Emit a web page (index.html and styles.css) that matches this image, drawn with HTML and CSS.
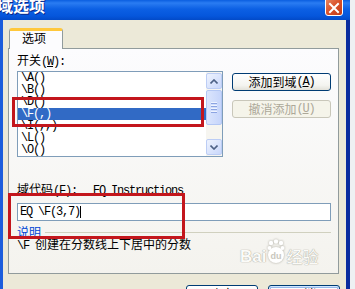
FILE: index.html
```html
<!DOCTYPE html>
<html>
<head>
  <meta charset="UTF-8">
  <title>域选项</title>
  <link rel="stylesheet" href="styles.css">
</head>
<body>
<div class="window">
  <div class="titlebar">
    <span class="title">域选项</span>
    <span class="close">
      <svg width="12" height="12" viewBox="0 0 12 12"><path d="M2 2L10 10M10 2L2 10" stroke="#fff" stroke-width="2" stroke-linecap="square"/></svg>
    </span>
  </div>
  <div class="frame">
    <div class="tab">选项</div>
    <div class="panel">
      <div class="label">开关<span class="a">(<u>W</u>):</span></div>
      <div class="switch-row">
        <div class="listbox">
          <ul class="items a">
            <li>\A()</li>
            <li>\B()</li>
            <li>\D()</li>
            <li class="sel">\F(,)</li>
            <li>\I(,,)</li>
            <li>\L()</li>
            <li>\O()</li>
          </ul>
          <div class="scrollbar">
            <div class="sb-btn">
              <svg width="8" height="5" viewBox="0 0 8 5"><path d="M0.5 4.5L4 1L7.5 4.5" fill="none" stroke="#4d6185" stroke-width="1.6"/></svg>
            </div>
            <div class="sb-thumb"><i></i><i></i><i></i><i></i></div>
            <div class="sb-track"></div>
            <div class="sb-btn">
              <svg width="8" height="5" viewBox="0 0 8 5"><path d="M0.5 0.5L4 4L7.5 0.5" fill="none" stroke="#4d6185" stroke-width="1.6"/></svg>
            </div>
          </div>
        </div>
        <div class="side-btns">
          <div class="btn">添加到域<span class="a">(<u>A</u>)</span></div>
          <div class="btn off">撤消添加<span class="a">(<u>U</u>)</span></div>
        </div>
      </div>
      <div class="code-label">域代码<span class="a">(<u>F</u>):</span><span class="a code-name">EQ Instructions</span></div>
      <div class="input"><span class="a">EQ \F(3,7)</span><span class="caret"></span></div>
      <div class="group"><span>说明</span><i class="rule"></i></div>
      <div class="desc"><span class="a">\F </span>创建在分数线上下居中的分数</div>
      <div class="watermark">
        <span class="wm-bai">Bai</span>
        <span class="wm-paw">
          <svg width="18" height="26" viewBox="0 0 18 26">
            <circle cx="4" cy="4" r="2.2" fill="#fff"/>
            <circle cx="9" cy="2.5" r="2.2" fill="#fff"/>
            <circle cx="14" cy="4" r="2.2" fill="#fff"/>
            <circle cx="2.5" cy="9" r="2" fill="#fff"/>
            <circle cx="15.5" cy="9" r="2" fill="#fff"/>
            <circle cx="9" cy="16" r="8" fill="#fff"/>
          </svg>
          <span class="wm-du">du</span>
        </span>
        <span class="wm-jy">经验</span>
      </div>
    </div>
    <div class="bottom-btns">
      <div class="btn big">确定</div>
      <div class="btn big default">取消</div>
    </div>
  </div>
</div>
<div class="mark mark-list"></div>
<div class="mark mark-code"></div>
</body>
</html>
```

FILE: styles.css
```css
* {
  margin: 0;
  padding: 0;
  box-sizing: border-box;
}

html, body {
  width: 355px;
  height: 289px;
  overflow: hidden;
}

body {
  background: #eef0f3;
  font-family: "Noto Sans CJK SC", sans-serif;
  font-size: 12px;
  line-height: 12px;
  color: #000;
  position: relative;
}

/* ascii text, SimSun-like half width */
.a {
  font-family: "Liberation Mono", monospace;
  font-size: 12px;
  letter-spacing: -1.2px;
}

ul {
  list-style: none;
}

.window {
  width: 350px;
  height: 289px;
  display: flex;
  flex-direction: column;
}

.titlebar {
  height: 20px;
  flex: none;
  display: flex;
  justify-content: space-between;
  align-items: flex-start;
  padding-right: 7px;
  background: linear-gradient(#0a5ee0, #2a7cf2 15%, #0c60e4 45%, #0556dc 80%, #024ac8);
  overflow: hidden;
}

.title {
  color: #fff;
  font-size: 16px;
  line-height: 16px;
  font-weight: bold;
  margin: -3px 0 0 -3px;
  text-shadow: 1px 1px 0 #0a2a8c;
}

.close {
  width: 18px;
  height: 19px;
  margin-top: -3px;
  display: flex;
  align-items: center;
  justify-content: center;
  padding-top: 3px;
  border: 1px solid #fff;
  border-radius: 3px;
  background: linear-gradient(135deg, #e98a66, #d9512a 50%, #c23a17);
}

.frame {
  flex: 1;
  background: #ece9d8;
  border-left: 3px solid #1c5ddc;
  border-right: 4px solid #0a2c9e;
  padding: 8px 7px 0 5px;
}

.tab {
  width: 54px;
  height: 21px;
  margin-left: 1px;
  margin-bottom: -1px;
  position: relative;
  z-index: 1;
  border: 1px solid #919b9c;
  border-top: 3px solid #ffc83c;
  border-bottom: none;
  border-radius: 3px 3px 0 0;
  background: #fcfcfe;
  padding: 1px 0 0 12px;
}

.panel {
  height: 226px;
  position: relative;
  border: 1px solid #919b9c;
  background: linear-gradient(#fcfcfe, #f4f3ee);
  padding: 5px 7px 0 8px;
}

.label {
  margin-bottom: 3px;
}

.switch-row {
  display: flex;
  gap: 9px;
}

.listbox {
  width: 206px;
  height: 86px;
  border: 1px solid #7f9db9;
  background: #fff;
  display: flex;
}

.items {
  flex: 1;
}

.items li {
  height: 12px;
  line-height: 12px;
  padding-left: 3px;
  white-space: pre;
}

.items li.sel {
  background: #316ac5;
  color: #fff;
}

.scrollbar {
  width: 16px;
  background: #f6f5f0;
  display: flex;
  flex-direction: column;
  padding: 1px 0 1px 0;
}

.sb-btn {
  height: 16px;
  flex: none;
  border: 1px solid #bccdf5;
  border-radius: 2px;
  background: linear-gradient(135deg, #eef3fe, #c9d7fb);
  display: flex;
  align-items: center;
  justify-content: center;
}

.sb-thumb {
  height: 35px;
  flex: none;
  margin-top: 1px;
  border: 1px solid #b3c7f4;
  border-radius: 2px;
  background: linear-gradient(90deg, #dbe5fd, #c6d5fb);
  display: flex;
  flex-direction: column;
  align-items: center;
  justify-content: center;
  gap: 1px;
}

.sb-thumb i {
  width: 6px;
  height: 1px;
  background: #eef3ff;
  border-bottom: 1px solid #8ca4e2;
  box-sizing: content-box;
}

.sb-track {
  flex: 1;
}

.side-btns {
  display: flex;
  flex-direction: column;
  gap: 9px;
  padding-top: 2px;
}

.btn {
  width: 99px;
  height: 18px;
  border: 1px solid #003c74;
  border-radius: 3px;
  background: linear-gradient(#ffffff, #f4f4f0 70%, #e2e1d9);
  display: flex;
  align-items: center;
  justify-content: center;
  white-space: pre;
}

.btn.off {
  border-color: #c9c7ba;
  color: #aca899;
  background: #f5f4ea;
}

.code-label {
  margin-top: 26px;
  white-space: pre;
}

.code-name {
  margin-left: 16px;
}

.input {
  margin-top: 6px;
  width: 314px;
  height: 18px;
  border: 1px solid #7f9db9;
  background: #fff;
  padding-left: 2px;
  display: flex;
  align-items: center;
  white-space: pre;
}

.caret {
  width: 1px;
  height: 12px;
  background: #000;
}

.group {
  margin-top: 5px;
  display: flex;
  align-items: center;
  width: 314px;
}

.group span {
  color: #0046d5;
}

.rule {
  flex: 1;
  height: 1px;
  margin-left: 4px;
  background: #d0d0bf;
}

.desc {
  white-space: pre;
}

.watermark {
  position: absolute;
  left: 231px;
  top: 190px;
  display: flex;
  align-items: flex-end;
}

.wm-bai {
  font-family: "Liberation Sans", sans-serif;
  font-weight: bold;
  font-size: 17px;
  line-height: 17px;
  color: #fbfbf8;
  text-shadow: 0 0 1px #a9a79c, 0 0 1px #a9a79c;
}

.wm-paw {
  position: relative;
  width: 18px;
  height: 26px;
  margin: 0 1px;
}

.wm-paw svg {
  filter: drop-shadow(0 0 1px #a9a79c);
}

.wm-du {
  position: absolute;
  left: 3px;
  top: 13px;
  font-family: "Liberation Sans", sans-serif;
  font-weight: bold;
  font-size: 9px;
  line-height: 9px;
  color: #c9c7bd;
}

.wm-jy {
  font-size: 16px;
  line-height: 18px;
  color: #fbfbf8;
  text-shadow: 0 0 1px #a9a79c, 0 0 1px #a9a79c;
}

.bottom-btns {
  margin-top: 11px;
  margin-right: -1px;
  display: flex;
  justify-content: flex-end;
  gap: 10px;
}

.btn.big {
  width: 72px;
  height: 23px;
  align-items: flex-start;
  padding-top: 2px;
}

.btn.default {
  box-shadow: inset 0 0 0 1px #cee7ff, inset 0 0 0 2px #98b8ea;
}

.mark {
  position: absolute;
  border: 3px solid #c3161c;
}

.mark-list {
  left: 12px;
  top: 97px;
  width: 192px;
  height: 30px;
}

.mark-code {
  left: 8px;
  top: 193px;
  width: 177px;
  height: 46px;
}
```
